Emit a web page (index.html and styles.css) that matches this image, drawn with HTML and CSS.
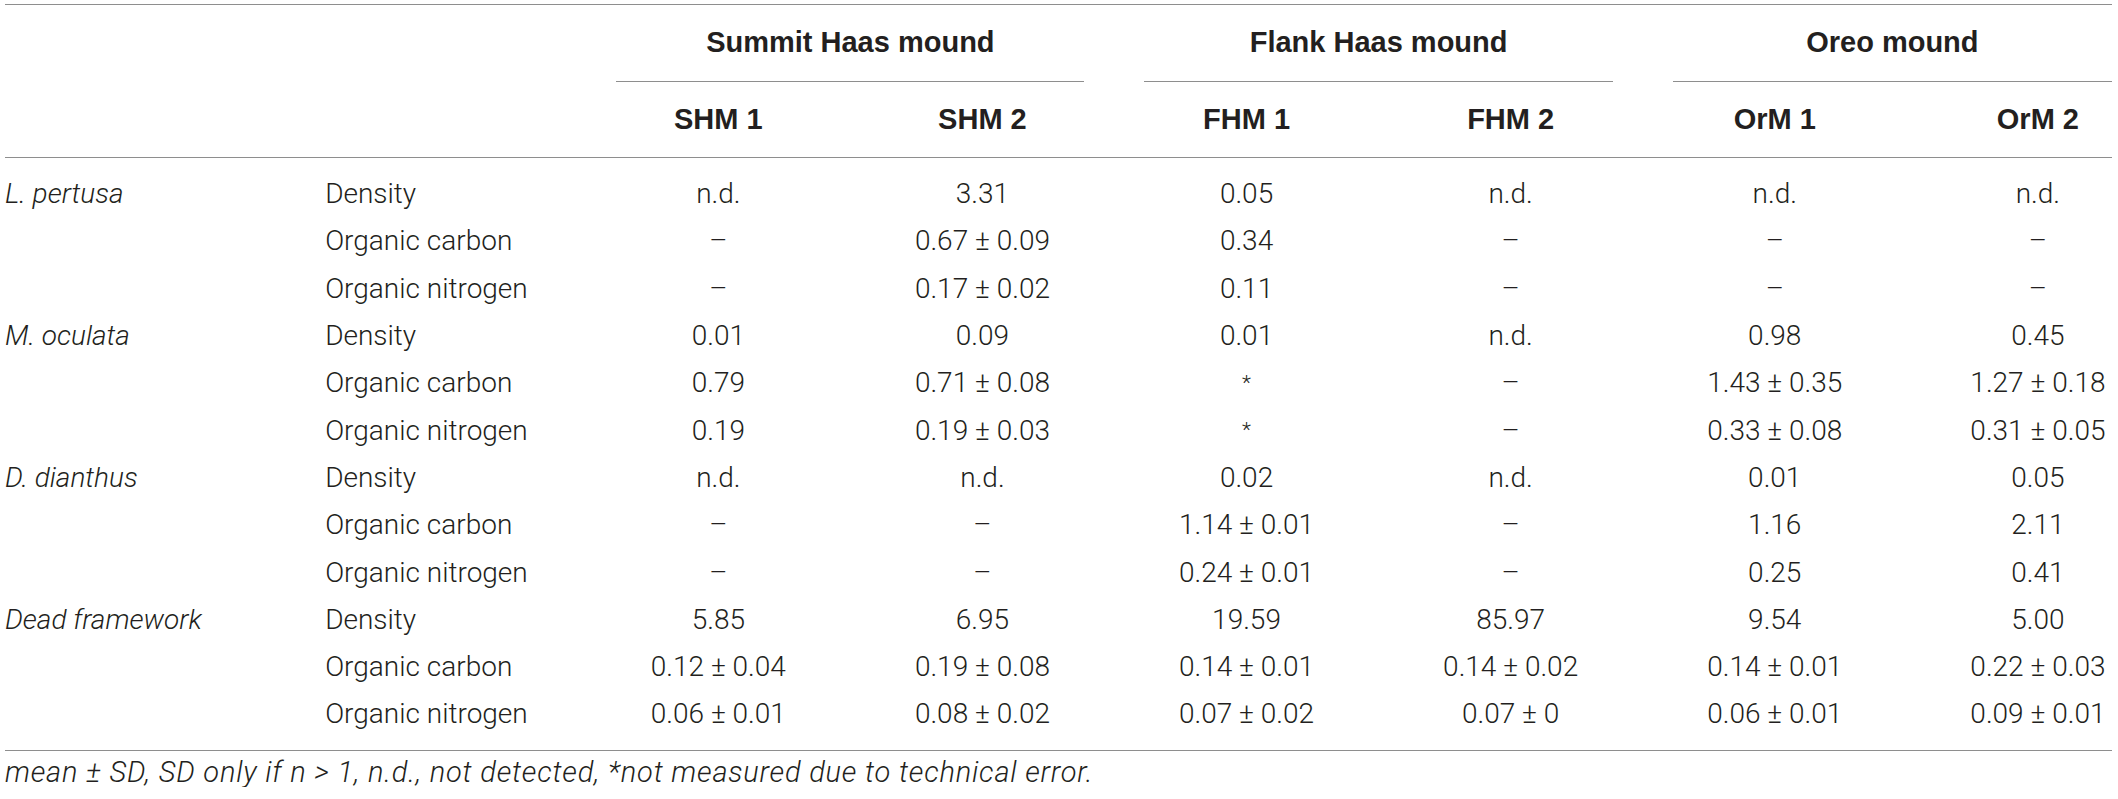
FILE: index.html
```
<!DOCTYPE html>
<html lang="en">

<head>
    <meta charset="UTF-8">
    <meta name="viewport" content="width=device-width, initial-scale=1.0">
    <link rel="stylesheet" href="styles.css">
    <title>Coral density and organic content</title>
</head>

<body>
    <div class="wrap">
        <table class="datatable">
            <colgroup>
                <col class="col-species">
                <col class="col-measure">
                <col class="col-site">
                <col class="col-site">
                <col class="col-site">
                <col class="col-site">
                <col class="col-site">
                <col class="col-last">
            </colgroup>
            <thead>
                <tr class="grouprow">
                    <th></th>
                    <th></th>
                    <th colspan="2"><div class="grouplabel">Summit Haas mound</div></th>
                    <th colspan="2"><div class="grouplabel">Flank Haas mound</div></th>
                    <th colspan="2"><div class="grouplabel lastgroup">Oreo mound</div></th>
                </tr>
                <tr class="siterow">
                    <th></th>
                    <th></th>
                    <th>SHM 1</th>
                    <th>SHM 2</th>
                    <th>FHM 1</th>
                    <th>FHM 2</th>
                    <th>OrM 1</th>
                    <th class="last">OrM 2</th>
                </tr>
            </thead>
            <tbody>
                <tr class="first">
                    <td class="species">L. pertusa</td>
                    <td class="measure">Density</td>
                    <td>n.d.</td><td>3.31</td><td>0.05</td><td>n.d.</td><td>n.d.</td><td class="last">n.d.</td>
                </tr>
                <tr>
                    <td></td>
                    <td class="measure">Organic carbon</td>
                    <td>–</td><td>0.67 ± 0.09</td><td>0.34</td><td>–</td><td>–</td><td class="last">–</td>
                </tr>
                <tr>
                    <td></td>
                    <td class="measure">Organic nitrogen</td>
                    <td>–</td><td>0.17 ± 0.02</td><td>0.11</td><td>–</td><td>–</td><td class="last">–</td>
                </tr>
                <tr>
                    <td class="species">M. oculata</td>
                    <td class="measure">Density</td>
                    <td>0.01</td><td>0.09</td><td>0.01</td><td>n.d.</td><td>0.98</td><td class="last">0.45</td>
                </tr>
                <tr>
                    <td></td>
                    <td class="measure">Organic carbon</td>
                    <td>0.79</td><td>0.71 ± 0.08</td><td class="star">*</td><td>–</td><td>1.43 ± 0.35</td><td class="last">1.27 ± 0.18</td>
                </tr>
                <tr>
                    <td></td>
                    <td class="measure">Organic nitrogen</td>
                    <td>0.19</td><td>0.19 ± 0.03</td><td class="star">*</td><td>–</td><td>0.33 ± 0.08</td><td class="last">0.31 ± 0.05</td>
                </tr>
                <tr>
                    <td class="species">D. dianthus</td>
                    <td class="measure">Density</td>
                    <td>n.d.</td><td>n.d.</td><td>0.02</td><td>n.d.</td><td>0.01</td><td class="last">0.05</td>
                </tr>
                <tr>
                    <td></td>
                    <td class="measure">Organic carbon</td>
                    <td>–</td><td>–</td><td>1.14 ± 0.01</td><td>–</td><td>1.16</td><td class="last">2.11</td>
                </tr>
                <tr>
                    <td></td>
                    <td class="measure">Organic nitrogen</td>
                    <td>–</td><td>–</td><td>0.24 ± 0.01</td><td>–</td><td>0.25</td><td class="last">0.41</td>
                </tr>
                <tr>
                    <td class="species">Dead framework</td>
                    <td class="measure">Density</td>
                    <td>5.85</td><td>6.95</td><td>19.59</td><td>85.97</td><td>9.54</td><td class="last">5.00</td>
                </tr>
                <tr>
                    <td></td>
                    <td class="measure">Organic carbon</td>
                    <td>0.12 ± 0.04</td><td>0.19 ± 0.08</td><td>0.14 ± 0.01</td><td>0.14 ± 0.02</td><td>0.14 ± 0.01</td><td class="last">0.22 ± 0.03</td>
                </tr>
                <tr class="final">
                    <td></td>
                    <td class="measure">Organic nitrogen</td>
                    <td>0.06 ± 0.01</td><td>0.08 ± 0.02</td><td>0.07 ± 0.02</td><td>0.07 ± 0</td><td>0.06 ± 0.01</td><td class="last">0.09 ± 0.01</td>
                </tr>
            </tbody>
        </table>
        <p class="tablenote">mean ± SD, SD only if <i>n</i> &gt; 1, n.d., not detected, *not measured due to technical error.</p>
    </div>
</body>

</html>
```

FILE: styles.css
```
* {
    padding: 0;
    margin: 0;
}

body {
    background-color: white;
    color: #231f20;
    font-family: Roboto, "Liberation Sans", sans-serif;
    font-weight: 300;
}

.wrap {
    padding: 4px 6px 0px 5px;
}

.datatable {
    width: 2107px;
    table-layout: fixed;
    border-collapse: collapse;
    border-top: 1px solid #8e8e8e;
    border-bottom: 1px solid #8e8e8e;
    font-size: 28px;
}

.col-species {
    width: 320px;
}

.col-measure {
    width: 261px;
}

.col-site {
    width: 264px;
}

.col-last {
    width: 205px;
}

.datatable th {
    font-family: "Liberation Sans", Arial, sans-serif;
    font-weight: bold;
    font-size: 29px;
    text-align: center;
}

.grouprow th {
    height: 77px;
    vertical-align: bottom;
}

.grouplabel {
    margin: 0px 30px;
    padding-bottom: 22px;
    border-bottom: 1px solid #8e8e8e;
}

.grouplabel.lastgroup {
    margin-right: 0px;
}

.siterow th {
    height: 75px;
    border-bottom: 1px solid #8e8e8e;
}

.datatable td {
    height: 47.3px;
    text-align: center;
    white-space: nowrap;
}

.datatable .last {
    padding-left: 57px;
}

.datatable td.species {
    text-align: left;
    font-style: italic;
}

.datatable td.measure {
    text-align: left;
}

.star {
    font-size: 21px;
}

.first td {
    padding-top: 12px;
}

.final td {
    padding-bottom: 12px;
}

.tablenote {
    font-style: italic;
    font-size: 29px;
    letter-spacing: 0.8px;
    line-height: 30px;
    padding-top: 6px;
}

.tablenote i {
    font-style: italic;
}
```
